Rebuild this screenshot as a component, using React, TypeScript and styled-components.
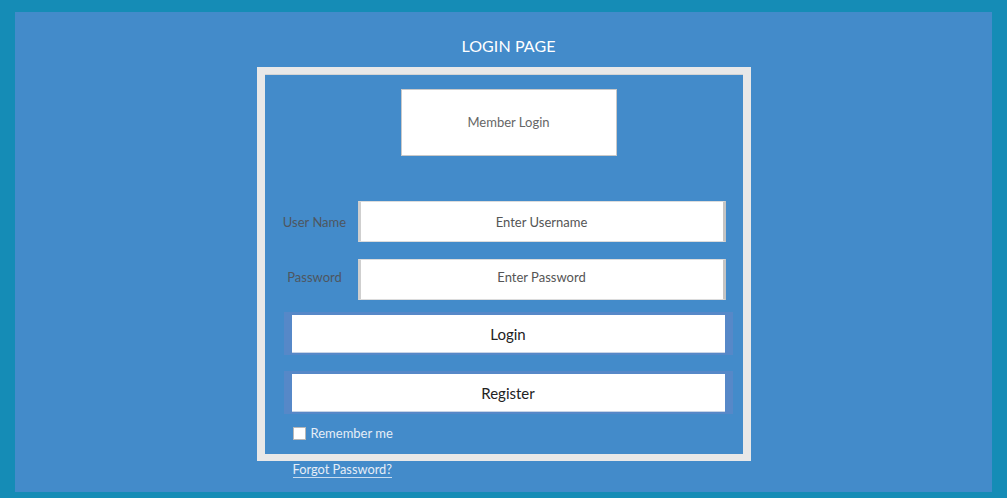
import React from "react";
import styled, { createGlobalStyle } from "styled-components";

const Global = createGlobalStyle`
  html, body { margin: 0; padding: 0; }
  body { font-family: Lato, "Open Sans", sans-serif; }
  * { box-sizing: border-box; }
`;

const Frame = styled.div`
  width: 1007px;
  height: 498px;
  background: #158cb6;
  padding: 12px 15px 6px 15px;
`;

const Stage = styled.div`
  height: 100%;
  background: #438bca;
  display: flex;
  flex-direction: column;
  align-items: center;
`;

const Title = styled.h1`
  margin: 0;
  padding: 25px 0 0 10px;
  height: 55px;
  font-size: 16px;
  font-weight: 400;
  line-height: 18px;
  color: #ffffff;
  letter-spacing: 0.1px;
`;

const Card = styled.div`
  width: 494px;
  height: 394px;
  border: solid #e8e8e8;
  border-width: 7px 8px 7px 8px;
  box-shadow: inset 0 1px 0 #d4d4d4;
  display: flex;
  flex-direction: column;
`;

const Header = styled.div`
  display: flex;
  justify-content: center;
  padding: 15px 0 0 10px;
`;

const MemberBox = styled.div`
  width: 216px;
  height: 67px;
  background: #ffffff;
  border: 1px solid #c9c9c9;
  display: flex;
  align-items: center;
  justify-content: center;
  padding-bottom: 2px;
  font-size: 13px;
  color: #666;
`;

const Row = styled.div<{ $top: number; $lift: number }>`
  display: flex;
  align-items: center;
  margin-top: ${(p) => p.$top}px;
  padding-left: 11px;

  & > * {
    padding-bottom: ${(p) => p.$lift}px;
  }
`;

const Label = styled.label`
  width: 78px;
  text-align: center;
  font-size: 13px;
  color: #4e5660;
  margin-right: 4px;
`;

const Field = styled.input`
  width: 368px;
  height: 41px;
  border: 1px solid #dcdcdc;
  border-left: 3px solid #cfcfcf;
  border-right: 3px solid #c4c4c4;
  background: #fff;
  text-align: center;
  font-family: Lato, sans-serif;
  font-size: 13px;
  color: #555;
  outline: none;
  &::placeholder { color: #555; }
`;

const ButtonWrap = styled.div<{ $top: number }>`
  margin: ${(p) => p.$top}px 0 0 19px;
  width: 449px;
  height: 43px;
  background: #5688c8;
  padding: 3px 8px 2px 8px;
`;

const Button = styled.button`
  width: 100%;
  height: 100%;
  border: none;
  border-bottom: 1px solid #c8d4e6;
  background: #fff;
  font-family: Lato, sans-serif;
  font-size: 15px;
  color: #222;
  cursor: pointer;
`;

const Remember = styled.label`
  display: flex;
  align-items: center;
  margin: 11px 0 0 28px;
  font-size: 13px;
  color: #e6eef7;
  gap: 5px;
`;

const Box = styled.span`
  width: 13px;
  height: 13px;
  background: #fff;
  border: 1px solid #b8b8b8;
  display: inline-block;
`;

const Footer = styled.div`
  width: 494px;
  height: 24px;
  padding: 1px 0 0 36px;
  display: flex;
  align-items: flex-start;
`;

const Forgot = styled.a`
  font-size: 12.8px;
  color: #e6eef7;
  text-decoration: none;
  border-bottom: 1px solid #c9dcef;
  line-height: 15px;
  display: inline-block;
`;

export default function App() {
  return (
    <>
      <Global />
      <Frame>
        <Stage>
          <Title>LOGIN PAGE</Title>
          <Card>
            <Header>
              <MemberBox>Member Login</MemberBox>
            </Header>
            <Row $top={45} $lift={0}>
              <Label>User Name</Label>
              <Field placeholder="Enter Username" />
            </Row>
            <Row $top={17} $lift={6}>
              <Label>Password</Label>
              <Field placeholder="Enter Password" type="password" />
            </Row>
            <ButtonWrap $top={12}>
              <Button>Login</Button>
            </ButtonWrap>
            <ButtonWrap $top={16}>
              <Button>Register</Button>
            </ButtonWrap>
            <Remember>
              <Box />
              Remember me
            </Remember>
          </Card>
          <Footer>
            <Forgot href="#">Forgot Password?</Forgot>
          </Footer>
        </Stage>
      </Frame>
    </>
  );
}
